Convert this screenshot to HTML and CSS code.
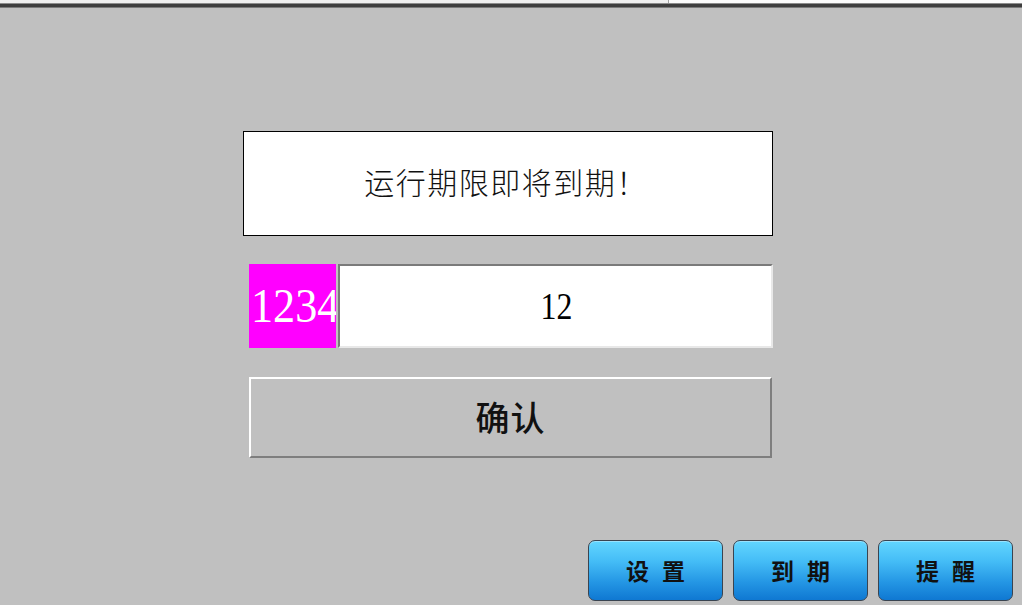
FILE: index.html
```html
<!DOCTYPE html>
<html lang="zh-CN">
<head>
<meta charset="utf-8">
<title>运行期限</title>
<link rel="stylesheet" href="styles.css">
</head>
<body>
<div class="screen">
  <div class="topbar">
    <div class="tab tab-left"></div>
    <div class="tab tab-right"></div>
  </div>
  <div class="topline"></div>
  <div class="panel">
    <div class="message">运行期限即将到期！</div>
    <div class="value-row">
      <div class="tag"><span class="tag-text">1234</span></div>
      <div class="value-field"><span class="value-text">12</span></div>
    </div>
    <div class="confirm">确认</div>
  </div>
  <div class="nav">
    <div class="nav-btn">设 置</div>
    <div class="nav-btn">到 期</div>
    <div class="nav-btn">提 醒</div>
  </div>
</div>
</body>
</html>
```

FILE: styles.css
```css
html, body {
  margin: 0;
  padding: 0;
}
body {
  background: #c0c0c0;
  font-family: "Noto Sans CJK SC", "Liberation Serif", serif;
}
.screen {
  width: 1022px;
  height: 605px;
  display: flex;
  flex-direction: column;
  overflow: hidden;
}
.topbar {
  display: flex;
  height: 3px;
}
.tab-left {
  width: 668px;
  background: #efefef;
  border-right: 1px solid #a0a0a0;
}
.tab-right {
  flex: 1;
  background: #fbfbfb;
}
.topline {
  height: 3px;
  background: #3e3e3e;
  border-top: 1px solid #8c8c8c;
  border-bottom: 1px solid #7a7a7a;
}
.panel {
  display: flex;
  flex-direction: column;
  padding-left: 243px;
  padding-top: 123px;
}
.message {
  width: 528px;
  height: 97px;
  padding-bottom: 6px;
  background: #ffffff;
  border: 1px solid #000000;
  display: flex;
  align-items: center;
  justify-content: center;
  font-size: 30px;
  letter-spacing: 1.5px;
  font-weight: 300;
  color: #111;
  padding-right: 4px;
  width: 524px;
}
.value-row {
  display: flex;
  margin-top: 28px;
  margin-left: 6px;
  height: 84px;
  gap: 2px;
}
.tag {
  width: 87px;
  height: 84px;
  background: #ff00ff;
  overflow: hidden;
  display: flex;
  align-items: center;
}
.tag-text {
  font-family: "Liberation Serif", serif;
  font-size: 48px;
  color: #ffffff;
  display: inline-block;
  transform: scaleX(0.92);
  transform-origin: left center;
  margin-left: 2px;
  white-space: nowrap;
  line-height: 1;
}
.value-field {
  width: 431px;
  height: 80px;
  background: #ffffff;
  border: 2px solid;
  border-color: #7a7a7a #e8e8e8 #e8e8e8 #7a7a7a;
  display: flex;
  align-items: center;
  justify-content: center;
}
.value-text {
  font-family: "Liberation Serif", serif;
  font-size: 37px;
  color: #000;
  display: inline-block;
  transform: scaleX(0.86);
  line-height: 1;
  margin-left: 2px;
}
.confirm {
  margin-top: 29px;
  margin-left: 6px;
  width: 519px;
  height: 74px;
  padding-bottom: 3px;
  border: 2px solid;
  border-color: #ffffff #7e7e7e #7e7e7e #ffffff;
  display: flex;
  align-items: center;
  justify-content: center;
  font-size: 34px;
  font-weight: 500;
  letter-spacing: 1px;
  color: #111;
}
.nav {
  margin-top: auto;
  margin-bottom: 4px;
  display: flex;
  justify-content: flex-end;
  gap: 10px;
  padding-right: 9px;
}
.nav-btn {
  width: 133px;
  height: 57px;
  padding-bottom: 2px;
  border: 1.5px solid #3a4450;
  border-radius: 7px;
  background: linear-gradient(to bottom, #62d6ff 0%, #44bcf6 35%, #2496e4 70%, #0f78d2 100%);
  box-shadow: inset 0 1px 0 rgba(255,255,255,0.35);
  display: flex;
  align-items: center;
  justify-content: center;
  font-size: 23px;
  font-weight: 700;
  color: #111;
  word-spacing: 8px;
  white-space: pre;
}
```
